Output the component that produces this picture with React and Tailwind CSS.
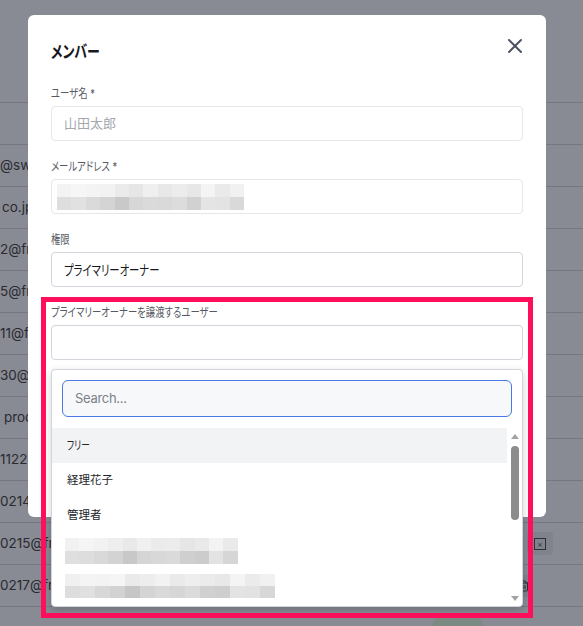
import { X, Trash2 } from "lucide-react";

const rows = [
  { text: "" },
  { text: "@sweetberry.jp" },
  { text: "co.jp", indent: "pl-[2px]" },
  { text: "2@free.co.jp" },
  { text: "5@free.co.jp" },
  { text: "11@free.co.jp" },
  { text: "30@free.co.jp" },
  { text: "r prod.co.jp", indent: "-ml-[5px]" },
  { text: "1122@free.jp" },
  { text: "0214@free.jp" },
  { text: "0215@free.jp", action: "box" },
  { text: "0217@free.jp", action: "trash" },
  { text: "", badge: true },
];

const emailCells = [
  ["bg-[#f3f3f3]", "bg-[#f6f6f6]", "bg-[#f4f4f4]", "bg-[#f2f2f2]", "bg-[#ebebeb]", "bg-[#e6e6e6]", "bg-[#efefef]", "bg-[#e8e8e8]", "bg-[#ececec]", "bg-[#e7e7e7]", "bg-[#f4f4f4]", "bg-[#eaeaea]", "bg-[#f1f1f1]"],
  ["bg-[#dedede]", "bg-[#e1e1e1]", "bg-[#dadada]", "bg-[#d4d4d4]", "bg-[#c9c9c9]", "bg-[#d7d7d7]", "bg-[#dadada]", "bg-[#d9d9d9]", "bg-[#dcdcdc]", "bg-[#d1d1d1]", "bg-[#e4e4e4]", "bg-[#e3e3e3]", "bg-[#d9d9d9]"],
];

const optCells4 = [
  ["bg-[#f1f1f1]", "bg-[#f5f5f5]", "bg-[#f2f2f2]", "bg-[#eeeeee]", "bg-[#e9e9e9]", "bg-[#f0f0f0]", "bg-[#ebebeb]", "bg-[#ececec]", "bg-[#e6e6e6]", "bg-[#e9e9e9]", "bg-[#f3f3f3]", "bg-[#eaeaea]"],
  ["bg-[#dfdfdf]", "bg-[#dddddd]", "bg-[#d9d9d9]", "bg-[#d3d3d3]", "bg-[#c8c8c8]", "bg-[#d5d5d5]", "bg-[#d8d8d8]", "bg-[#dadada]", "bg-[#cfcfcf]", "bg-[#cccccc]", "bg-[#e3e3e3]", "bg-[#d6d6d6]"],
];

const optCells5 = [
  ["bg-[#f0f0f0]", "bg-[#f4f4f4]", "bg-[#f3f3f3]", "bg-[#f5f5f5]", "bg-[#eaeaea]", "bg-[#ededed]", "bg-[#f2f2f2]", "bg-[#eaeaea]", "bg-[#eeeeee]", "bg-[#ebebeb]", "bg-[#e8e8e8]", "bg-[#f4f4f4]", "bg-[#ebebeb]", "bg-[#f1f1f1]"],
  ["bg-[#dddddd]", "bg-[#e0e0e0]", "bg-[#d8d8d8]", "bg-[#d2d2d2]", "bg-[#c6c6c6]", "bg-[#d4d4d4]", "bg-[#d9d9d9]", "bg-[#d6d6d6]", "bg-[#dbdbdb]", "bg-[#d0d0d0]", "bg-[#cecece]", "bg-[#e3e3e3]", "bg-[#e2e2e2]", "bg-[#d7d7d7]"],
];

const Mosaic = ({ cells, cellClass }) => (
  <div className="flex flex-col">
    {cells.map((row, i) => (
      <div key={i} className="flex">
        {row.map((c, j) => (
          <div key={j} className={`${cellClass} ${c}`} />
        ))}
      </div>
    ))}
  </div>
);

// narrow kana like the Windows UI font in the screenshot
const narrow = "inline-block origin-left whitespace-nowrap";

const Field = ({ label, className = "", children, borderClass = "border-[#e5e7eb]" }) => (
  <div className={className}>
    <div className="h-[18px] text-[12px] leading-[18px] text-[#555a63]">
      <span className={`${narrow} scale-x-[0.78]`}>{label}</span>
    </div>
    <div className={`mt-[3px] flex h-[35px] items-center rounded-[4px] border bg-white ${borderClass}`}>
      {children}
    </div>
  </div>
);

const options = [
  { label: "フリー", active: true, cls: "text-[12px] scale-x-[0.72]" },
  { label: "経理花子", cls: "text-[11.5px]" },
  { label: "管理者", cls: "text-[11.5px]" },
  { mosaic: optCells4, cellClass: "h-[13px] w-[14.4px]" },
  { mosaic: optCells5, cellClass: "h-[12px] w-[15px]" },
];

export default function App() {
  return (
    <div className="relative h-[626px] w-[583px] overflow-hidden bg-[#888a94] font-['Inter','Noto_Sans_CJK_JP',sans-serif] [font-feature-settings:'palt']">
      {/* table behind overlay */}
      <div className="flex flex-col">
        <div className="h-[103px] border-b border-[#75767f]" />
        {rows.map((r, i) => (
          <div
            key={i}
            className={`flex h-[42px] border-b border-[#75767f] text-[13.5px] text-[#2a2b31] ${
              r.badge ? "items-start pt-[10px]" : "items-center"
            }`}
          >
            <span className={`w-[300px] whitespace-nowrap ${r.indent || ""}`}>{r.text}</span>
            {r.action === "box" && (
              <div className="ml-[227px] flex h-[23px] w-[26px] items-center justify-center rounded-[4px] bg-[#80828c]">
                <div className="flex h-[12px] w-[12px] items-center justify-center border border-[#2f3036] text-[8px] leading-none text-[#2f3036]">
                  ×
                </div>
              </div>
            )}
            {r.action === "trash" && (
              <div className="ml-[218px] flex h-[22px] w-[12px] items-center justify-end rounded-[4px] bg-[#80828c]">
                <Trash2 size={12} className="text-[#2f3036]" />
              </div>
            )}
            {r.badge && <div className="ml-[133px] h-[16px] w-[50px] rounded-full bg-[#7b8a82]" />}
          </div>
        ))}
      </div>

      {/* modal */}
      <div className="absolute left-[28px] top-[15px] h-[502px] w-[518px] rounded-[6px] bg-white px-[23px] pt-[25px]">
        <div className="flex items-start justify-between">
          <h2 className="h-[24px] text-[17px] font-bold leading-[24px] text-[#16181d]">
            <span className={`${narrow} scale-x-[0.76]`}>メンバー</span>
          </h2>
          <button className="-mr-[4px] -mt-[6px] text-[#4b5260]">
            <X size={24} strokeWidth={1.9} />
          </button>
        </div>

        <Field label="ユーザ名 *" className="mt-[21px]">
          <span className="pl-[12px] text-[13px] text-[#a3a7ae]">山田太郎</span>
        </Field>

        <Field label="メールアドレス *" className="mt-[17px]">
          <div className="pl-[5px]">
            <Mosaic cells={emailCells} cellClass="h-[13px] w-[14.4px]" />
          </div>
        </Field>

        <Field label="権限" className="mt-[17px]" borderClass="border-[#d3d5dc]">
          <span className="pl-[12px] text-[14px] text-[#16181d]">
            <span className={`${narrow} scale-x-[0.74]`}>プライマリーオーナー</span>
          </span>
        </Field>

        <div className="relative">
          <Field
            label="プライマリーオーナーを譲渡するユーザー"
            className="mt-[17px]"
            borderClass="border-[#d3d5dc]"
          />

          {/* dropdown */}
          <div className="absolute left-0 right-0 top-full z-10 mt-[9px] flex h-[238px] flex-col rounded-[4px] border border-[#d3d5dc] bg-white shadow-[0_3px_8px_rgba(0,0,0,0.18)]">
            <div className="px-[10px] pt-[10px]">
              <div className="flex h-[37px] items-center rounded-[6px] border-[1.5px] border-[#4a78e6] bg-[#f7f8fa] pl-[12px] text-[13px] tracking-[-0.3px] text-[#7b8089]">
                Search...
              </div>
            </div>
            <div className="mt-[11px] flex min-h-0 flex-1 overflow-hidden">
              <div className="flex-1">
                {options.map((o, i) => (
                  <div
                    key={i}
                    className={`flex h-[35px] items-center text-[#23252a] ${
                      o.active ? "bg-[#f2f3f5]" : ""
                    } ${o.mosaic ? "pl-[13px]" : "pl-[15px]"}`}
                  >
                    {o.mosaic ? (
                      <Mosaic cells={o.mosaic} cellClass={o.cellClass} />
                    ) : (
                      <span className={`${narrow} ${o.cls}`}>{o.label}</span>
                    )}
                  </div>
                ))}
              </div>
              <div className="flex w-[15px] flex-col items-center">
                <div className="mt-[6px] h-0 w-0 border-x-[4px] border-b-[5px] border-x-transparent border-b-[#a3a3a3]" />
                <div className="mt-[7px] h-[74px] w-[8px] rounded-full bg-[#8c8c8c]" />
                <div className="mb-[5px] mt-auto h-0 w-0 border-x-[4px] border-t-[5px] border-x-transparent border-t-[#a3a3a3]" />
              </div>
            </div>
          </div>
        </div>
      </div>

      {/* annotation frame */}
      <div className="pointer-events-none absolute left-[41px] top-[297px] z-20 h-[321px] w-[492px] border-[5px] border-[#ff0f5b]" />
    </div>
  );
}
